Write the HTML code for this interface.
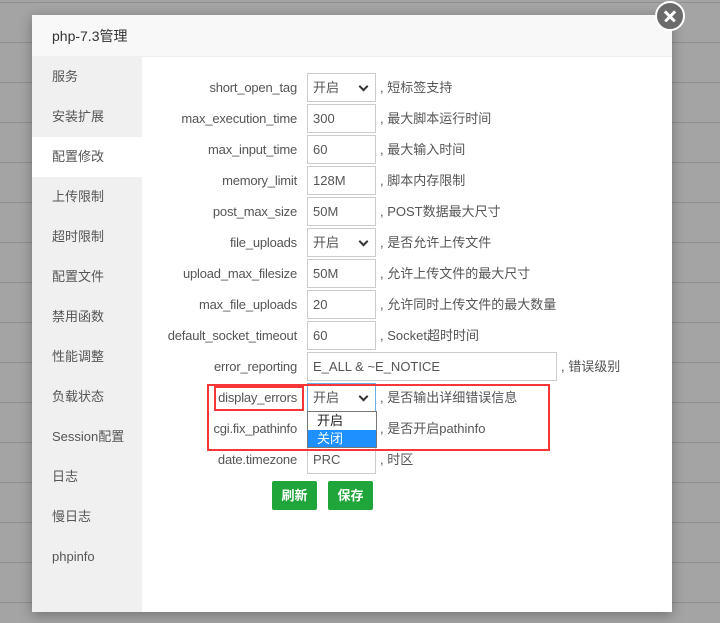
<!DOCTYPE html>
<html><head><meta charset="utf-8">
<style>
*{margin:0;padding:0;box-sizing:border-box}
body{width:720px;height:623px;overflow:hidden;position:relative;font-family:"Liberation Sans","Noto Sans CJK SC",sans-serif;font-size:13px;color:#555;
background:repeating-linear-gradient(180deg,#a4a4a4 0,#a4a4a4 2px,#8e8e8e 2px,#8e8e8e 3px,#a4a4a4 3px,#a4a4a4 40px);}
.dlg{position:absolute;left:32px;top:15px;width:640px;height:597px;background:#fff;box-shadow:0 3px 12px rgba(0,0,0,.3)}
.title{height:42px;background:#f8f8f8;border-bottom:1px solid #eee;padding-left:20px;line-height:42px;font-size:14px;color:#333}
.side{position:absolute;left:0;top:42px;width:110px;bottom:0;background:#f0f0f0}
.side div{height:40px;line-height:40px;padding-left:20px;color:#555}
.side .on{background:#fff}
.row{position:absolute;left:110px;height:29px;width:520px}
.lab{position:absolute;right:365px;top:0;line-height:29px;white-space:nowrap;color:#555;letter-spacing:-0.2px}
.inp{position:absolute;left:165px;top:0;width:69px;height:29px;border:1px solid #ccc;line-height:27px;padding-left:5px;color:#555;background:#fff}
.inp.sel::after{content:"";position:absolute;right:8px;top:9px;width:5px;height:5px;border-right:2px solid #333;border-bottom:2px solid #333;transform:rotate(45deg)}
.desc{position:absolute;left:238px;top:0;line-height:29px;white-space:nowrap;color:#555}
.btn{position:absolute;top:466px;height:29px;width:45px;background:#20a53a;color:#fff;line-height:29px;text-align:center;border-radius:2px;font-size:13px;font-weight:bold}
.red{position:absolute;border:2px solid #f53737}
.x{position:absolute;left:655px;top:1px;width:30px;height:30px;border-radius:50%;background:#6b6b6b;border:2px solid #fff}
.x::before,.x::after{content:"";position:absolute;left:6px;top:12px;width:14px;height:2.5px;background:#fff;transform:rotate(45deg)}
.x::after{transform:rotate(-45deg)}
.dd{position:absolute;left:307px;top:411px;width:70px;height:37px;border:1px solid #777;background:#fff;font-size:13px;color:#222}
.dd div{height:17.5px;line-height:17px;padding-left:9px}
.dd .h{background:#1e90ff;color:#fff}
</style></head><body>
<div class="dlg">
<div class="title">php-7.3管理</div>
<div class="side">
<div>服务</div><div>安装扩展</div><div class="on">配置修改</div><div>上传限制</div><div>超时限制</div><div>配置文件</div><div>禁用函数</div><div>性能调整</div><div>负载状态</div><div>Session配置</div><div>日志</div><div>慢日志</div><div>phpinfo</div>
</div>
<div class="row" style="top:58px"><span class="lab">short_open_tag</span><span class="inp sel">开启</span><span class="desc">, 短标签支持</span></div>
<div class="row" style="top:89px"><span class="lab">max_execution_time</span><span class="inp">300</span><span class="desc">, 最大脚本运行时间</span></div>
<div class="row" style="top:120px"><span class="lab">max_input_time</span><span class="inp">60</span><span class="desc">, 最大输入时间</span></div>
<div class="row" style="top:151px"><span class="lab">memory_limit</span><span class="inp">128M</span><span class="desc">, 脚本内存限制</span></div>
<div class="row" style="top:182px"><span class="lab">post_max_size</span><span class="inp">50M</span><span class="desc">, POST数据最大尺寸</span></div>
<div class="row" style="top:213px"><span class="lab">file_uploads</span><span class="inp sel">开启</span><span class="desc">, 是否允许上传文件</span></div>
<div class="row" style="top:244px"><span class="lab">upload_max_filesize</span><span class="inp">50M</span><span class="desc">, 允许上传文件的最大尺寸</span></div>
<div class="row" style="top:275px"><span class="lab">max_file_uploads</span><span class="inp">20</span><span class="desc">, 允许同时上传文件的最大数量</span></div>
<div class="row" style="top:306px"><span class="lab">default_socket_timeout</span><span class="inp">60</span><span class="desc">, Socket超时时间</span></div>
<div class="row" style="top:337px"><span class="lab">error_reporting</span><span class="inp" style="width:250px">E_ALL &amp; ~E_NOTICE</span><span class="desc" style="left:419px">, 错误级别</span></div>
<div class="row" style="top:368px"><span class="lab">display_errors</span><span class="inp sel" style="border-color:#66afe9">开启</span><span class="desc">, 是否输出详细错误信息</span></div>
<div class="row" style="top:399px"><span class="lab">cgi.fix_pathinfo</span><span class="inp sel">开启</span><span class="desc">, 是否开启pathinfo</span></div>
<div class="row" style="top:430px"><span class="lab">date.timezone</span><span class="inp">PRC</span><span class="desc">, 时区</span></div>
<div class="btn" style="left:240px">刷新</div>
<div class="btn" style="left:296px">保存</div>
</div>
<div class="red" style="left:207px;top:384px;width:343px;height:67px"></div>
<div class="red" style="left:214px;top:386px;width:90px;height:25px"></div>
<div class="dd"><div>开启</div><div class="h">关闭</div></div>
<div class="x"></div>
</body></html>
